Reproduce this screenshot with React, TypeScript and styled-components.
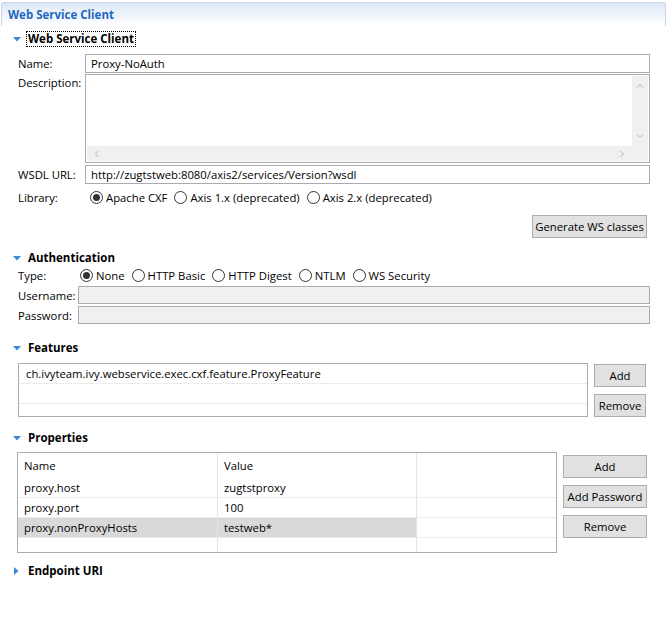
import React from 'react';
import styled, { createGlobalStyle } from 'styled-components';

const GlobalStyle = createGlobalStyle`
  body {
    margin: 0;
    background: #fff;
    font-family: "Open Sans", "Liberation Sans", sans-serif;
    font-size: 11.3px;
    color: #000;
  }
`;

const Page = styled.div`
  width: 668px;
  height: 628px;
  overflow: hidden;
`;

const TitleBar = styled.div`
  margin: 2px 2px 0 1px;
  height: 23px;
  border: 1px solid #c6d4e6;
  border-bottom: none;
  border-radius: 3px 3px 0 0;
  background: linear-gradient(#dde8f5, #ffffff);
  display: flex;
  align-items: center;
  padding-left: 6px;
`;

const Title = styled.span`
  color: #1d68c0;
  font-weight: 700;
  font-size: 11.5px;
`;

const Body = styled.div`
  padding: 0 18px;
`;

const SectionHead = styled.div<{ $mt: number }>`
  display: flex;
  align-items: center;
  height: 16px;
  margin-top: ${(p) => p.$mt}px;
  margin-left: -6px;
`;

const Twisty = styled.span`
  width: 9px;
  height: 16px;
  display: flex;
  align-items: center;
  justify-content: center;
  margin-right: 6px;
`;

const HeadText = styled.span<{ $focus?: boolean }>`
  font-weight: 700;
  font-size: 11.5px;
  padding: 0 1px;
  line-height: 14px;
  outline: ${(p) => (p.$focus ? '1px dotted #000' : 'none')};
`;

const Row = styled.div<{ $mt: number; $label: number; $top?: boolean }>`
  display: grid;
  grid-template-columns: ${(p) => p.$label}px 1fr;
  align-items: ${(p) => (p.$top ? 'start' : 'center')};
  margin-top: ${(p) => p.$mt}px;
`;

const Label = styled.span<{ $pt?: number }>`
  padding-top: ${(p) => p.$pt || 0}px;
  white-space: nowrap;
`;

const Input = styled.div<{ $disabled?: boolean; $h?: number }>`
  height: ${(p) => p.$h || 19}px;
  box-sizing: border-box;
  border: 1px solid #a9abb0;
  background: ${(p) => (p.$disabled ? '#f0f0f0' : '#fff')};
  display: flex;
  align-items: center;
  padding-left: 5px;
`;

const TextArea = styled.div`
  height: 89px;
  box-sizing: border-box;
  border: 1px solid #a9abb0;
  display: grid;
  grid-template-columns: 1fr 16px;
  grid-template-rows: 1fr 15px;
  padding: 1px;
`;

const Bar = styled.div<{ $dir: 'col' | 'row' }>`
  background: #f0f0f0;
  display: flex;
  flex-direction: ${(p) => (p.$dir === 'col' ? 'column' : 'row')};
  justify-content: space-between;
  align-items: center;
  padding: ${(p) => (p.$dir === 'col' ? '6px 0' : '0 6px')};
`;

const Corner = styled.div`
  background: #f0f0f0;
`;

const RadioGroup = styled.div<{ $gap: number }>`
  display: flex;
  align-items: center;
  gap: ${(p) => p.$gap}px;
`;

const RadioItem = styled.label`
  display: flex;
  align-items: center;
  gap: 3px;
  white-space: nowrap;
`;

const Circle = styled.span<{ $on?: boolean }>`
  width: 13px;
  height: 13px;
  box-sizing: border-box;
  border: 1px solid #333;
  border-radius: 50%;
  display: flex;
  align-items: center;
  justify-content: center;
  &::after {
    content: '';
    width: 7px;
    height: 7px;
    border-radius: 50%;
    background: ${(p) => (p.$on ? '#333' : 'transparent')};
  }
`;

const ButtonRow = styled.div<{ $mt: number }>`
  display: flex;
  justify-content: flex-end;
  margin-top: ${(p) => p.$mt}px;
  padding-right: 3px;
`;

const Button = styled.div<{ $w: number; $h?: number }>`
  width: ${(p) => p.$w}px;
  height: ${(p) => p.$h || 23}px;
  box-sizing: border-box;
  background: #e1e1e1;
  border: 1px solid #adadad;
  display: flex;
  align-items: center;
  justify-content: center;
  white-space: nowrap;
`;

const ListRow = styled.div<{ $mt: number; $left?: number }>`
  display: flex;
  gap: 6px;
  margin-top: ${(p) => p.$mt}px;
  margin-left: ${(p) => p.$left || 0}px;
  padding-right: 3px;
`;

const ButtonCol = styled.div<{ $gap: number; $pt: number }>`
  display: flex;
  flex-direction: column;
  gap: ${(p) => p.$gap}px;
  padding-top: ${(p) => p.$pt}px;
`;

const List = styled.div`
  width: 570px;
  height: 54px;
  box-sizing: border-box;
  border: 1px solid #a9abb0;
  overflow: hidden;
`;

const ListLine = styled.div`
  height: 19px;
  border-bottom: 1px solid #ececec;
  display: flex;
  align-items: center;
  padding-left: 7px;
`;

const Table = styled.div`
  width: 541px;
  height: 101px;
  box-sizing: border-box;
  border: 1px solid #a9abb0;
  overflow: hidden;
`;

const TRow = styled.div<{ $head?: boolean }>`
  display: grid;
  grid-template-columns: 200px 199px 1fr;
  height: ${(p) => (p.$head ? 25 : 19)}px;
  border-bottom: ${(p) => (p.$head ? 'none' : '1px solid #ececec')};
`;

const Cell = styled.div<{ $sel?: boolean; $last?: boolean }>`
  display: flex;
  align-items: center;
  padding-left: 6px;
  background: ${(p) => (p.$sel ? '#d9d9d9' : 'transparent')};
  border-right: ${(p) => (p.$last ? 'none' : '1px solid #e5e5e5')};
  white-space: nowrap;
`;

const Down = () => (
  <svg width="8" height="5" viewBox="0 0 8 5">
    <polygon points="0,0 8,0 4,4.5" fill="#3d87d8" />
  </svg>
);

const Right = () => (
  <svg width="5" height="8" viewBox="0 0 5 8">
    <polygon points="0,0 0,8 4.5,4" fill="#3d87d8" />
  </svg>
);

const Chevron = ({ d }: { d: string }) => (
  <svg width="8" height="8" viewBox="0 0 8 8">
    <polyline points={d} fill="none" stroke="#b4b4b4" strokeWidth="1" />
  </svg>
);

const Radio = ({ label, on }: { label: string; on?: boolean }) => (
  <RadioItem>
    <Circle $on={on} />
    {label}
  </RadioItem>
);

const props = [
  { name: 'proxy.host', value: 'zugtstproxy' },
  { name: 'proxy.port', value: '100' },
  { name: 'proxy.nonProxyHosts', value: 'testweb*', sel: true },
  { name: '', value: '' },
];

export default function App() {
  return (
    <Page>
      <GlobalStyle />
      <TitleBar>
        <Title>Web Service Client</Title>
      </TitleBar>
      <Body>
        <SectionHead $mt={5}>
          <Twisty><Down /></Twisty>
          <HeadText $focus>Web Service Client</HeadText>
        </SectionHead>

        <Row $mt={7} $label={67}>
          <Label>Name:</Label>
          <Input>Proxy-NoAuth</Input>
        </Row>
        <Row $mt={1} $label={67} $top>
          <Label $pt={1}>Description:</Label>
          <TextArea>
            <div />
            <Bar $dir="col">
              <Chevron d="1,5.5 4,2.5 7,5.5" />
              <Chevron d="1,2.5 4,5.5 7,2.5" />
            </Bar>
            <Bar $dir="row">
              <Chevron d="5.5,1 2.5,4 5.5,7" />
              <Chevron d="2.5,1 5.5,4 2.5,7" />
            </Bar>
            <Corner />
          </TextArea>
        </Row>
        <Row $mt={2} $label={67}>
          <Label>WSDL URL:</Label>
          <Input>http://zugtstweb:8080/axis2/services/Version?wsdl</Input>
        </Row>
        <Row $mt={6} $label={72}>
          <Label>Library:</Label>
          <RadioGroup $gap={7}>
            <Radio label="Apache CXF" on />
            <Radio label="Axis 1.x (deprecated)" />
            <Radio label="Axis 2.x (deprecated)" />
          </RadioGroup>
        </Row>
        <ButtonRow $mt={10}>
          <Button $w={115}>Generate WS classes</Button>
        </ButtonRow>

        <SectionHead $mt={12}>
          <Twisty><Down /></Twisty>
          <HeadText>Authentication</HeadText>
        </SectionHead>
        <Row $mt={2} $label={62}>
          <Label>Type:</Label>
          <RadioGroup $gap={7}>
            <Radio label="None" on />
            <Radio label="HTTP Basic" />
            <Radio label="HTTP Digest" />
            <Radio label="NTLM" />
            <Radio label="WS Security" />
          </RadioGroup>
        </Row>
        <Row $mt={3} $label={60}>
          <Label>Username:</Label>
          <Input $disabled $h={18} />
        </Row>
        <Row $mt={2} $label={60}>
          <Label>Password:</Label>
          <Input $disabled $h={18} />
        </Row>

        <SectionHead $mt={16}>
          <Twisty><Down /></Twisty>
          <HeadText>Features</HeadText>
        </SectionHead>
        <ListRow $mt={7}>
          <List>
            <ListLine>ch.ivyteam.ivy.webservice.exec.cxf.feature.ProxyFeature</ListLine>
            <ListLine />
            <ListLine />
          </List>
          <ButtonCol $gap={7} $pt={1}>
            <Button $w={52}>Add</Button>
            <Button $w={52}>Remove</Button>
          </ButtonCol>
        </ListRow>

        <SectionHead $mt={13}>
          <Twisty><Down /></Twisty>
          <HeadText>Properties</HeadText>
        </SectionHead>
        <ListRow $mt={6} $left={-1}>
          <Table>
            <TRow $head>
              <Cell>Name</Cell>
              <Cell>Value</Cell>
              <Cell $last />
            </TRow>
            {props.map((p, i) => (
              <TRow key={i}>
                <Cell $sel={p.sel}>{p.name}</Cell>
                <Cell $sel={p.sel}>{p.value}</Cell>
                <Cell $last />
              </TRow>
            ))}
          </Table>
          <ButtonCol $gap={7} $pt={3}>
            <Button $w={84}>Add</Button>
            <Button $w={84}>Add Password</Button>
            <Button $w={84}>Remove</Button>
          </ButtonCol>
        </ListRow>

        <SectionHead $mt={10}>
          <Twisty><Right /></Twisty>
          <HeadText>Endpoint URI</HeadText>
        </SectionHead>
      </Body>
    </Page>
  );
}
